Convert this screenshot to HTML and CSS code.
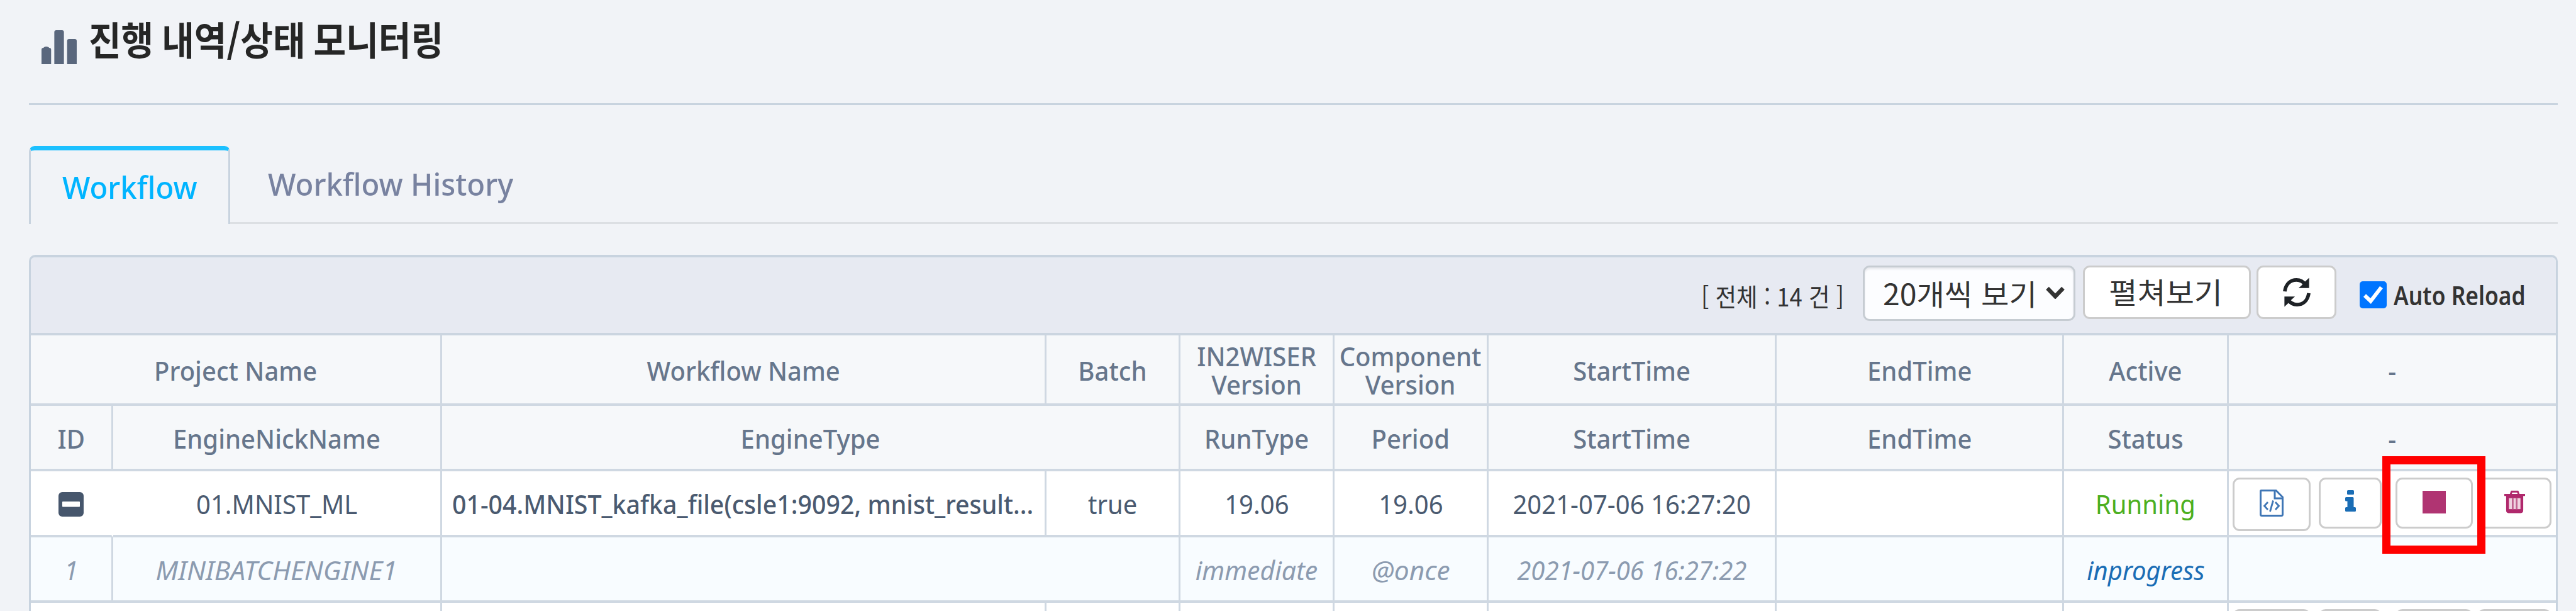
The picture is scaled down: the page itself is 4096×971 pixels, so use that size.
FILE: index.html
```html
<!DOCTYPE html>
<html lang="ko">
<head>
<meta charset="utf-8">
<title>진행 내역/상태 모니터링</title>
<link rel="stylesheet" href="styles.css">
</head>
<body>
<header class="page-head">
  <svg class="head-icon" viewBox="0 0 55 54" preserveAspectRatio="none"><path d="M0 54V31q0-3 3-3l1-1q3-2 7 0l1 1q3 0 3 3v23zM20 54V3q0-3 3-3h9q3 0 3 3v51zM40 54V17q0-3 3-3h9q3 0 3 3v37z" fill="#5a677d"/></svg>
  <h1 class="head-title"><span class="fit title-fit">진행 내역/상태 모니터링</span></h1>
</header>
<nav class="tabs">
  <a class="tab active"><span class="fit tab-fit">Workflow</span></a>
  <a class="tab"><span class="fit tab-fit">Workflow History</span></a>
</nav>
<main class="panel">
  <div class="toolbar">
    <div class="total"><span class="fit total-fit">[ 전체 : 14 건 ]</span></div>
    <div class="select"><span class="fit select-fit">20개씩 보기</span>
      <svg class="chevron" viewBox="0 0 30 20"><path d="M2.5 3L15 16L27.5 3" fill="none" stroke="#333" stroke-width="6.5"/></svg></div>
    <button class="btn expand"><span class="fit expand-fit">펼쳐보기</span></button>
    <button class="btn reload">
      <svg class="reload-icon" viewBox="0 0 46 48" fill="none"><path d="M3 22.500C5 9.500 13 3.500 22.500 3.500C29 3.500 34 6.500 38 12" stroke="#1e2226" stroke-width="6"/><path d="M43.500 0V17H26Q31 13 36 7Z" fill="#1e2226"/><path d="M43 25.500C41 38.500 33 44.500 23.500 44.500C17 44.500 12 41.500 8 36" stroke="#1e2226" stroke-width="6"/><path d="M2.500 48V31H20Q15 35 10 41Z" fill="#1e2226"/></svg>
    </button>
    <label class="auto">
      <svg class="check" viewBox="0 0 43 43"><rect width="43" height="43" rx="5" fill="#0075ff"/><path d="M8 22.500L17.500 31.500L34.500 9.500" fill="none" stroke="#fff" stroke-width="6"/></svg>
      <span class="fit auto-fit">Auto Reload</span>
    </label>
  </div>

  <div class="row head head-main">
    <div class="cell span-2"><span class="fit">Project Name</span></div>
    <div class="cell"><span class="fit">Workflow Name</span></div>
    <div class="cell"><span class="fit">Batch</span></div>
    <div class="cell"><span class="fit">IN2WISER<br>Version</span></div>
    <div class="cell"><span class="fit">Component<br>Version</span></div>
    <div class="cell"><span class="fit">StartTime</span></div>
    <div class="cell"><span class="fit">EndTime</span></div>
    <div class="cell"><span class="fit">Active</span></div>
    <div class="cell"><span class="fit">-</span></div>
  </div>
  <div class="row head head-sub">
    <div class="cell"><span class="fit">ID</span></div>
    <div class="cell"><span class="fit">EngineNickName</span></div>
    <div class="cell span-2"><span class="fit">EngineType</span></div>
    <div class="cell"><span class="fit">RunType</span></div>
    <div class="cell"><span class="fit">Period</span></div>
    <div class="cell"><span class="fit">StartTime</span></div>
    <div class="cell"><span class="fit">EndTime</span></div>
    <div class="cell"><span class="fit">Status</span></div>
    <div class="cell"><span class="fit">-</span></div>
  </div>
  <div class="row item">
    <div class="cell open">
      <svg class="minus" viewBox="0 0 40 39"><rect width="40" height="39" rx="6" fill="#46566c"/><rect x="6" y="15" width="28" height="8.500" rx="1" fill="#fff"/></svg>
    </div>
    <div class="cell"><span class="fit">01.MNIST_ML</span></div>
    <div class="cell name"><span class="fit name-fit">01-04.MNIST_kafka_file(csle1:9092, mnist_result...</span></div>
    <div class="cell"><span class="fit">true</span></div>
    <div class="cell"><span class="fit">19.06</span></div>
    <div class="cell"><span class="fit">19.06</span></div>
    <div class="cell"><span class="fit">2021-07-06 16:27:20</span></div>
    <div class="cell"></div>
    <div class="cell running"><span class="fit">Running</span></div>
    <div class="cell actions">
      <button class="btn act file">
        <svg class="file-icon" viewBox="0 0 38 43" fill="none" stroke="#3f76b5" stroke-width="3"><path d="M1.500 2.500Q1.500 1.500 2.500 1.500H26L36.500 12V39.500Q36.500 41.500 34.500 41.500H3.500Q1.500 41.500 1.500 39.500Z"/><path d="M24 2V14H36"/><path d="M13 20L7.500 26L13 32M25 20L30.500 26L25 32M21.500 17.500L16.500 35" stroke-width="2.800"/></svg>
      </button>
      <button class="btn act info">
        <svg class="info-icon" viewBox="0 0 17 34" fill="#1a6db5"><path d="M4.500 0h8q1.500 0 1.500 1.500v4q0 1.500-1.500 1.500h-8q-1.500 0-1.500-1.500v-4q0-1.500 1.500-1.500zM1.500 11H12q1.500 0 1.500 1.500V27h2q1.500 0 1.500 1.500v4q0 1.500-1.500 1.500h-14q-1.500 0-1.500-1.500v-4q0-1.500 1.500-1.500H3.500V17.500h-2Q0 17.500 0 16v-3.500Q0 11 1.500 11z"/></svg>
      </button>
      <button class="btn act stop"><i class="stop-icon"></i></button>
      <button class="btn act trash">
        <svg class="trash-icon" viewBox="0 0 34 37"><path d="M10.500 6L12 1.800H22L23.500 6" fill="none" stroke="#b0286c" stroke-width="3"/><path d="M0 5.500H34V9H31V32.500Q31 37 27 37H7Q3 37 3 32.500V9H0Z" fill="#b0286c"/><rect x="7.500" y="12.500" width="19" height="18" fill="#f0d3e0"/><path d="M13.800 12.500V30.500M20.200 12.500V30.500" stroke="#c0628f" stroke-width="2.800"/></svg>
      </button>
      <div class="marker"></div>
    </div>
  </div>
  <div class="row engine">
    <div class="cell"><span class="fit">1</span></div>
    <div class="cell"><span class="fit engine-fit">MINIBATCHENGINE1</span></div>
    <div class="cell span-2"></div>
    <div class="cell"><span class="fit immediate-fit">immediate</span></div>
    <div class="cell"><span class="fit engine-fit">@once</span></div>
    <div class="cell"><span class="fit date-fit">2021-07-06 16:27:22</span></div>
    <div class="cell"></div>
    <div class="cell progress"><span class="fit">inprogress</span></div>
    <div class="cell"></div>
  </div>
  <div class="row item">
    <div class="cell open"></div>
    <div class="cell"></div>
    <div class="cell"></div>
    <div class="cell"></div>
    <div class="cell"></div>
    <div class="cell"></div>
    <div class="cell"></div>
    <div class="cell"></div>
    <div class="cell"></div>
    <div class="cell actions">
      <button class="btn act file"></button>
      <button class="btn act info"></button>
      <button class="btn act stop"></button>
      <button class="btn act trash"></button>
    </div>
  </div>
</main>
</body>
</html>
```
FILE: styles.css
```css
* { box-sizing: border-box; }

html, body { margin: 0; height: 971px; overflow: hidden; }

body {
  background: #f1f3f7;
  color: #4a5a70;
  font: 41px/45px "Noto Sans", "Noto Sans CJK KR", sans-serif;
}

/* Horizontally narrowed text */
.fit {
  display: inline-block;
  white-space: nowrap;
  transform: scaleX(var(--k, 0.977));
}

.page-head {
  display: flex;
  align-items: flex-start;
  height: 167px;
  margin: 0 29px 0 46px;
  padding-left: 20px;
  border-bottom: 3px solid #c8d3df;
}
.head-icon { width: 56px; height: 54px; margin-top: 48px; }
.head-title {
  margin: 21px 0 0 19px;
  font: 700 62px/80px "Noto Sans CJK KR", sans-serif;
  color: #262626;
}
.title-fit { --k: 0.905; transform-origin: left; word-spacing: -3px; }

.tabs {
  display: flex;
  margin: 65px 29px 0 46px;
  height: 124px;
  font-size: 49px;
  font-weight: 500;
  color: #7882a0;
}
.tab {
  display: flex;
  align-items: center;
  padding: 0 58px 0 60px;
  border-bottom: 3px solid #dcdfe3;
}
.tab:last-child { flex: 1; }
.tab.active {
  justify-content: center;
  width: 320px;
  padding: 0;
  border: 3px solid #c8d3df;
  border-top: 7px solid #1cc0ff;
  border-bottom: 0;
  border-radius: 9px 9px 0 0;
  color: #00b4ff;
}
.tab-fit { --k: 0.965; transform-origin: left; }
.tab.active .tab-fit { transform-origin: center; }

.panel {
  margin: 49px 29px 0 46px;
  border: 3px solid #c8d3df;
  border-top-width: 4px;
  border-bottom: 0;
  border-radius: 10px 10px 0 0;
}

.toolbar {
  display: flex;
  align-items: flex-start;
  justify-content: flex-end;
  height: 124px;
  padding: 13px 50px 0 0;
  background: #e7eaf2;
  border-bottom: 4px solid #cbd5e0;
  border-radius: 7px 7px 0 0;
  color: #333;
}
.total {
  width: 222px;
  margin: 26px 35px 0 0;
  font: 40px/45px "Noto Sans CJK KR", sans-serif;
}
.total-fit { --k: 0.912; transform-origin: left; }
.select {
  display: flex;
  align-items: center;
  justify-content: space-between;
  width: 338px;
  height: 88px;
  margin-right: 12px;
  padding: 0 14px 3px 29px;
  background: #fcfdff;
  border: 3px solid #c6ccd2;
  border-radius: 11px;
  font: 46px/50px "Noto Sans CJK KR", sans-serif;
  box-shadow: inset 0 3px 3px #e8e9ee;
}
.select-fit { --k: 1.05; transform-origin: left; }
.chevron { width: 30px; height: 20px; }
.btn {
  display: flex;
  align-items: center;
  justify-content: center;
  padding: 0;
  background: #fff;
  border: 3px solid #ccc;
  border-radius: 11px;
  color: #333;
  font: 46px/50px "Noto Sans CJK KR", sans-serif;
}
.expand { width: 267px; height: 85px; margin-right: 9px; padding: 0 3px 5px 0; }
.expand-fit { --k: 1.068; }
.reload { width: 127px; height: 85px; margin-right: 37px; }
.reload-icon { width: 44px; height: 47px; }
.auto { display: flex; width: 262px; margin-top: 25px; font-weight: 600; }
.check { flex: none; width: 43px; height: 43px; margin-right: 11px; }
.auto-fit { --k: 0.862; transform-origin: left; }

.row {
  display: grid;
  grid-template-columns: 131px 523px 961px 213px 245px 245px 458px 457px 262px 520px;
  height: 105px;
}
.cell {
  display: flex;
  align-items: center;
  justify-content: center;
  padding-top: 4px;
  border-right: 3px solid #cfd8e2;
  border-bottom: 4px solid #cfd8e2;
  text-align: center;
}
.cell:last-child { border-right: 0; }
.span-2 { grid-column: span 2; }
.head { background: #f6f8fa; color: #66768c; font-weight: 500; }
.head-main { height: 112px; }
.head-sub { height: 104px; }
.item { background: #fff; }
.engine { background: #f8fcff; color: #8c9bb0; font-style: italic; height: 104px; }
.engine-fit { --k: 1.035; }
.immediate-fit { --k: 1; }
.open { border-right-color: transparent; }
.minus { width: 40px; height: 39px; }
.name { justify-content: flex-start; padding-left: 16px; font-weight: 500; }
.name-fit { --k: 0.959; transform-origin: left; }
.running { color: #4caf20; }
.progress { color: #1a6db5; }

.cell.actions {
  position: relative;
  align-items: flex-start;
  justify-content: flex-start;
  padding: 10px 0 0 6px;
}
.act { height: 81px; }
.file { width: 124px; height: 85px; margin-right: 13px; }
.info { width: 100px; margin-right: 22px; }
.stop { width: 123px; margin-right: 7px; }
.trash { width: 118px; }
.file-icon { width: 38px; height: 43px; margin-bottom: 5px; }
.info-icon { width: 17px; height: 34px; margin-bottom: 7px; }
.stop-icon { width: 37px; height: 36px; margin-bottom: 4px; background: #b03472; }
.trash-icon { width: 33px; height: 37px; margin: 0 0 4px 1px; }

/* Highlight frame laid over the stop button */
.marker {
  position: absolute;
  left: 244px;
  top: -24px;
  width: 164px;
  height: 155px;
  border: 13px solid #f00;
}

.row:last-child { overflow: hidden; height: 17px; }
.row:last-child .cell { border-bottom: 0; }
```
